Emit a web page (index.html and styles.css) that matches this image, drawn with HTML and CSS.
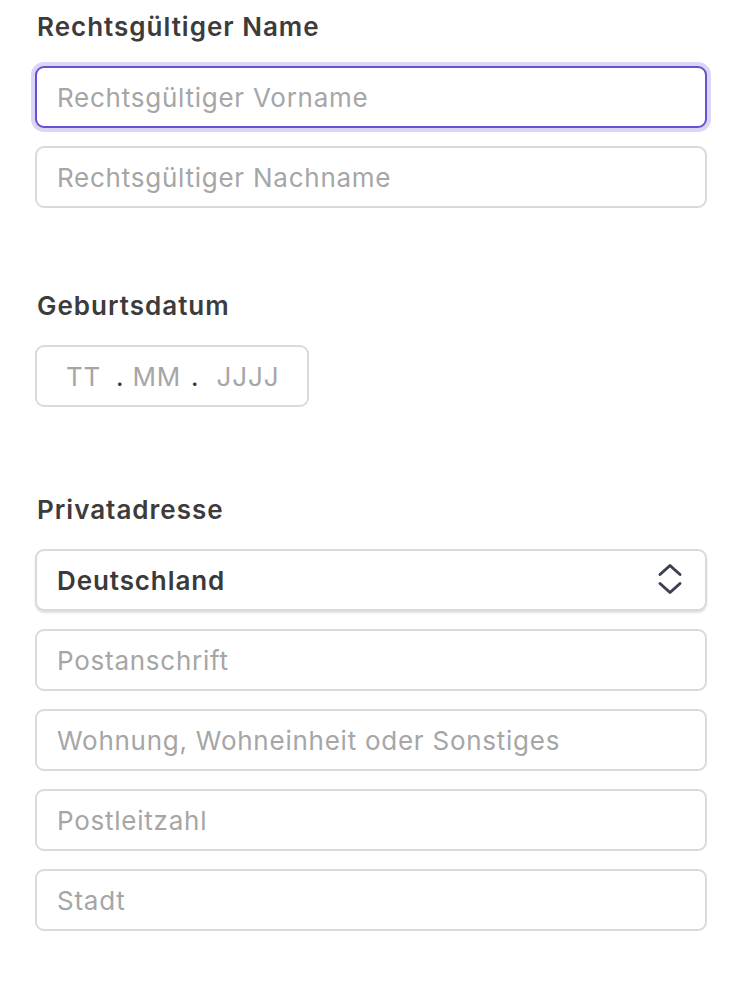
FILE: index.html
```html
<!DOCTYPE html>
<html lang="de">
<head>
<meta charset="utf-8">
<link rel="stylesheet" href="styles.css">
</head>
<body>
<form class="form">
  <section class="group group-name">
    <div class="label">Rechtsgültiger Name</div>
    <div class="stack">
      <div class="field focused"><span class="ph">Rechtsgültiger Vorname</span></div>
      <div class="field"><span class="ph">Rechtsgültiger Nachname</span></div>
    </div>
  </section>
  <section class="group group-dob">
    <div class="label">Geburtsdatum</div>
    <div class="field date">
      <span class="ph seg-tt">TT</span>
      <span class="dot">.</span>
      <span class="ph seg-mm">MM</span>
      <span class="dot">.</span>
      <span class="ph seg-yy">JJJJ</span>
    </div>
  </section>
  <section class="group group-addr">
    <div class="label">Privatadresse</div>
    <div class="stack">
      <div class="field select">
        <span class="value">Deutschland</span>
        <svg class="chev" width="26" height="34" viewBox="0 0 26 34" aria-hidden="true">
          <path d="M3 11.5 L13 2.5 L23 11.5" fill="none" stroke="#3b4150" stroke-width="3" stroke-linecap="round" stroke-linejoin="round"/>
          <path d="M3 20.5 L13 29.5 L23 20.5" fill="none" stroke="#3b4150" stroke-width="3" stroke-linecap="round" stroke-linejoin="round"/>
        </svg>
      </div>
      <div class="field"><span class="ph">Postanschrift</span></div>
      <div class="field"><span class="ph">Wohnung, Wohneinheit oder Sonstiges</span></div>
      <div class="field"><span class="ph">Postleitzahl</span></div>
      <div class="field"><span class="ph">Stadt</span></div>
    </div>
  </section>
</form>
</body>
</html>
```
FILE: styles.css
```css
html, body {
  margin: 0;
  padding: 0;
  background: #ffffff;
}
body {
  font-family: Inter, "Noto Sans", "Liberation Sans", sans-serif;
  color: #3a3a3a;
}
.form {
  display: flex;
  flex-direction: column;
  padding: 11px 37px 0 35px;
  width: 672px;
}
.group {
  display: flex;
  flex-direction: column;
}
.group-dob {
  margin-top: 82px;
}
.group-addr {
  margin-top: 87px;
}
.label {
  font-size: 26px;
  line-height: 32px;
  font-weight: 600;
  color: #3c3c3c;
  margin: 0 0 23px 2px;
  letter-spacing: 1px;
}
.stack {
  display: flex;
  flex-direction: column;
  gap: 18px;
}
.field {
  box-sizing: border-box;
  height: 62px;
  border: 2px solid #dadada;
  border-radius: 9px;
  display: flex;
  align-items: center;
  padding: 0 20px;
  font-size: 26px;
  background: #fff;
}
.field.focused {
  border-color: #6b4fd1;
  box-shadow: 0 0 0 4px #dcd5f5;
}
.ph {
  color: #a6a6a6;
  letter-spacing: 0.75px;
}
.date {
  width: 274px;
  padding-left: 29px;
}
.date .dot {
  color: #333;
  font-size: 26px;
}
.seg-tt { margin-right: 15px; }
.seg-mm { margin: 0 10px 0 9px; }
.seg-yy { margin-left: 18px; letter-spacing: 0.9px; }
.select {
  justify-content: space-between;
  box-shadow: 0 2px 2px rgba(0, 0, 0, 0.12);
  padding-right: 22px;
}
.select .value {
  font-weight: 600;
  color: #3a3a3a;
  letter-spacing: 0.9px;
}
.chev {
  display: block;
}
```
